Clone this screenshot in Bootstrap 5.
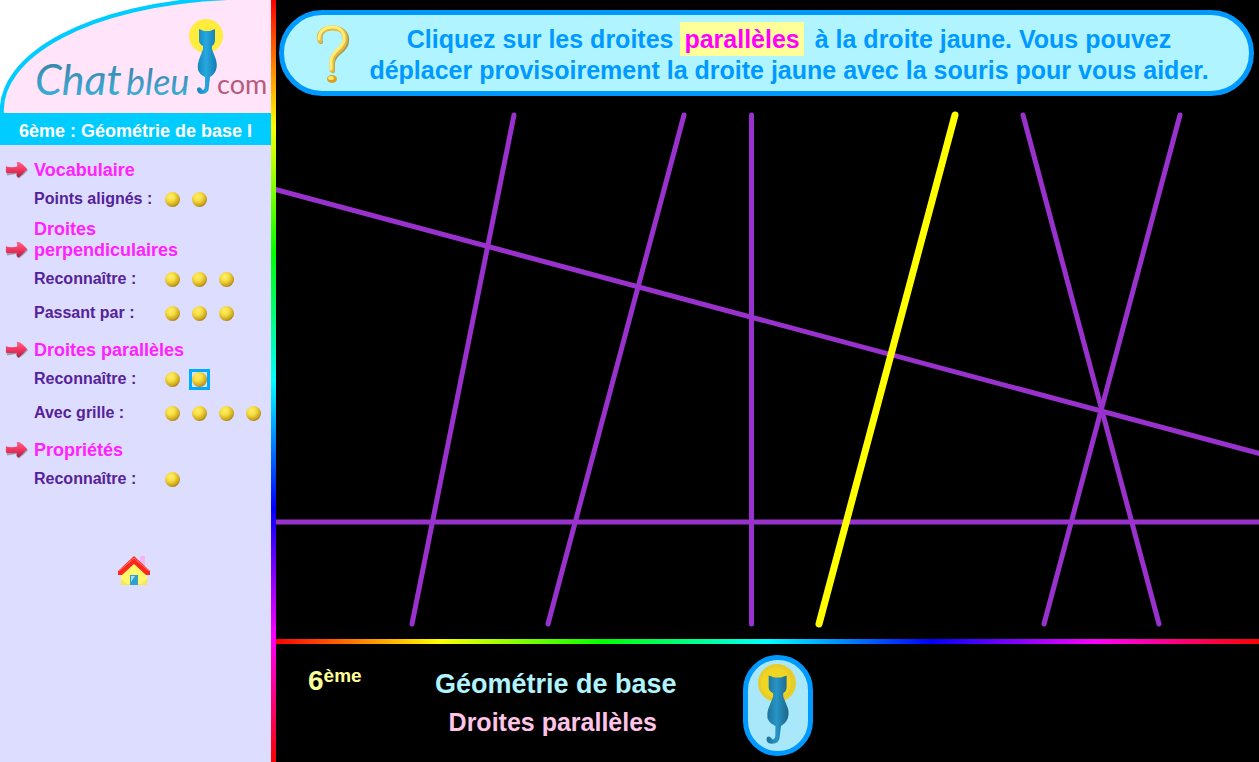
<!DOCTYPE html>
<html lang="fr">
<head>
<meta charset="utf-8">
<meta name="viewport" content="width=device-width, initial-scale=1">
<title>Chat bleu - Droites parallèles</title>
<link href="https://cdn.jsdelivr.net/npm/bootstrap@5.3.0/dist/css/bootstrap.min.css" rel="stylesheet">
<style>
  body { background: #000; font-family: "Liberation Sans", Arial, sans-serif; font-weight: 700; }
  .side { width: 271px; background: #ddf; }
  .side-title { background: #0cf; font-size: 18px; line-height: 32px; padding-top: 2px; height: 32px; }
  .logo { display: block; width: 100%; background: #fff; }
  .rainbow-v { width: 5px; background: linear-gradient(to bottom, red, #ff0, #0f0, #0ff, #00f, #f0f, red); }
  .rainbow-h { height: 5px; background: linear-gradient(to right, red, #ff0, #0f0, #0ff, #00f, #f0f, red); }
  .menu { padding-top: 5px; }
  .topic { min-height: 32px; padding: 3px 40px 1px 5px; gap: 5px; color: #f2f; font-size: 18px; line-height: 21px; margin: 0; font-weight: 700; }
  .topic svg { margin-bottom: 2px; }
  .exo { height: 34px; padding-left: 34px; color: #529; font-size: 16px; }
  .exo-name { width: 128px; }
  .balls { gap: 6px; }
  .ball { width: 21px; height: 21px; padding: 3px; display: block; }
  .ball::before { content: ""; display: block; width: 15px; height: 15px; border-radius: 50%;
    background: radial-gradient(circle at 38% 32%, #fff06a 0, #f5dc42 32%, #cfa81c 62%, #72560a 94%); }
  .ball.current { border: 3px solid #0af; padding: 0; }
  .home { margin-top: 59px; padding-right: 4px; }
  .banner { margin: 10px 5px 0 3px; padding: 9px 29px 5px 31px; gap: 7px; border: 5px solid #09f; background: #b0f4ff; color: #09f; font-size: 25px; line-height: 31px; }
  .key { background: #ff9; color: #f0f; padding: 3px 4px; margin-right: 4px; }
  .board { display: block; width: 100%; }
  .foot { padding: 11px 32px 6px; }
  .level { width: 127px; color: #ff9; font-size: 28px; line-height: 32px; padding-top: 10px; }
  .level sup { font-size: 19px; top: -8px; vertical-align: baseline; }
  .chapter { padding-top: 10px; }
  .chapter h1 { font-size: 27px; line-height: 38px; color: #b0f4ff; font-weight: 700; margin: 0; }
  .chapter h2 { font-size: 25px; line-height: 38px; color: #ffc4e8; font-weight: 700; margin: 0; padding-right: 6px; }
  .cat-badge { width: 70px; height: 101px; margin-left: 66px; border: 5px solid #09f; border-radius: 35px; background: #a8e8fa; padding: 0; }
</style>
</head>
<body>
<svg width="0" height="0" class="position-absolute" aria-hidden="true">
  <defs>
    <linearGradient id="catBlue" x1="0" x2="1"><stop offset="0" stop-color="#1c6f96"/><stop offset=".45" stop-color="#2795c6"/><stop offset="1" stop-color="#1c658b"/></linearGradient>
    <linearGradient id="catLight" x1="0" x2="1"><stop offset="0" stop-color="#1585bb"/><stop offset=".45" stop-color="#27a8e0"/><stop offset="1" stop-color="#147caf"/></linearGradient>
    <linearGradient id="red" x1="0" x2="0" y1="0" y2="1"><stop offset="0" stop-color="#ff6688"/><stop offset=".5" stop-color="#f43562"/><stop offset="1" stop-color="#a42545"/></linearGradient>
    <linearGradient id="script" x1="0" x2="0" y1="0" y2="1"><stop offset="0" stop-color="#3b7c9c"/><stop offset="1" stop-color="#3bb5e5"/></linearGradient>
    <path id="catShape" d="M14 10L19 12H25L30 10V21Q30 25 27 27V30Q28 33 30 38Q33 45 31 51Q29 56 25 58L24 67Q24 75 17 75Q12 75 12 70Q13 67 16 69Q17 71 18 71Q20 70 20 66V58Q15 56 13 51Q12 45 15 38Q17 33 18 30V27Q14 25 14 21Z"/>
    <g id="arrow"><path d="M2 8L13 8V2Q19 4 25 9Q20 15 15 18Q12 17 14 13L2 15Z" fill="#777" opacity=".6"/><path d="M1 5Q7 7 14 5L13 2Q12 0 14 0Q18 1 24 8Q19 14 15 17Q11 16 13 12Q8 13 1 12Z" fill="url(#red)"/></g>
  </defs>
</svg>
<div class="d-flex min-vh-100">
  <aside class="side flex-shrink-0">
    <svg class="logo" viewBox="0 0 271 113" role="img" aria-label="Chat bleu.com">
      <path d="M2 115C-3 56 88 4 228-2H273V115Z" fill="#ffe4fa" stroke="#0cf" stroke-width="4"/>
      <path d="M269 0h2v113h-2z" fill="#ffe4fa"/>
      <circle cx="206" cy="36" r="17" fill="#ffec3d"/>
      <g fill="url(#script)" font-family="Lato, sans-serif" font-weight="400" font-style="italic">
        <text x="35" y="95" font-size="43">Chat</text>
        <text x="126" y="95" font-size="36">bleu</text>
      </g>
      <text x="217" y="94" font-family="Lato, sans-serif" font-size="27" font-weight="400" fill="#b85a7c">com</text>
      <use href="#catShape" transform="translate(185 19)" fill="url(#catLight)"/>
    </svg>
    <div class="side-title text-white text-center">6ème : Géométrie de base I</div>
    <nav class="menu" aria-label="Exercices">
      <h2 class="topic d-flex align-items-end"><svg class="flex-shrink-0" width="24" height="18" viewBox="0 0 26 18"><use href="#arrow"/></svg><span>Vocabulaire</span></h2>
      <div class="exo d-flex align-items-center"><span class="exo-name">Points alignés :</span><div class="balls d-flex"><a class="ball" href="#" aria-label="Exercice 1"></a><a class="ball" href="#" aria-label="Exercice 2"></a></div></div>
      <h2 class="topic d-flex align-items-end"><svg class="flex-shrink-0" width="24" height="18" viewBox="0 0 26 18"><use href="#arrow"/></svg><span>Droites perpendiculaires</span></h2>
      <div class="exo d-flex align-items-center"><span class="exo-name">Reconnaître :</span><div class="balls d-flex"><a class="ball" href="#" aria-label="Exercice 1"></a><a class="ball" href="#" aria-label="Exercice 2"></a><a class="ball" href="#" aria-label="Exercice 3"></a></div></div>
      <div class="exo d-flex align-items-center"><span class="exo-name">Passant par :</span><div class="balls d-flex"><a class="ball" href="#" aria-label="Exercice 1"></a><a class="ball" href="#" aria-label="Exercice 2"></a><a class="ball" href="#" aria-label="Exercice 3"></a></div></div>
      <h2 class="topic d-flex align-items-end"><svg class="flex-shrink-0" width="24" height="18" viewBox="0 0 26 18"><use href="#arrow"/></svg><span class="text-nowrap">Droites parallèles</span></h2>
      <div class="exo d-flex align-items-center"><span class="exo-name">Reconnaître :</span><div class="balls d-flex"><a class="ball" href="#" aria-label="Exercice 1"></a><a class="ball current" href="#" aria-label="Exercice 2" aria-current="page"></a></div></div>
      <div class="exo d-flex align-items-center"><span class="exo-name">Avec grille :</span><div class="balls d-flex"><a class="ball" href="#" aria-label="Exercice 1"></a><a class="ball" href="#" aria-label="Exercice 2"></a><a class="ball" href="#" aria-label="Exercice 3"></a><a class="ball" href="#" aria-label="Exercice 4"></a></div></div>
      <h2 class="topic d-flex align-items-end"><svg class="flex-shrink-0" width="24" height="18" viewBox="0 0 26 18"><use href="#arrow"/></svg><span>Propriétés</span></h2>
      <div class="exo d-flex align-items-center"><span class="exo-name">Reconnaître :</span><div class="balls d-flex"><a class="ball" href="#" aria-label="Exercice 1"></a></div></div>
    </nav>
    <div class="home text-center">
      <a href="#" aria-label="Accueil"><svg width="34" height="31" viewBox="0 0 34 31">
        <path d="M23 1h5v12h-5z" fill="#f3b5ee"/>
        <path d="M4 17L17 5L30 17V30H4Z" fill="#fff86a"/><path d="M4 24V30H30V24L24 29H10Z" fill="#f7e84c"/>
        <path d="M1 16L17 1L33 16V20H29L17 9L5 20H1Z" fill="#fb2820"/><path d="M2 16L17 3L32 16" fill="none" stroke="#ff7a6e" stroke-width="1"/>
        <path d="M13 20h8v10h-8z" fill="#2fa0d0"/><path d="M14 21h4l-4 6z" fill="#9fe2f5"/>
      </svg></a>
    </div>
  </aside>
  <div class="rainbow-v flex-shrink-0"></div>
  <main class="flex-grow-1 d-flex flex-column">
    <div class="banner rounded-pill d-flex align-items-center">
      <svg class="flex-shrink-0" width="36" height="60" viewBox="0 0 36 60" aria-hidden="true">
        <g fill="none" stroke-linecap="round" stroke-linejoin="round">
          <path d="M6 17C3 7 11 3 18 3C28 3 33 9 32 17C31 27 19 27 18 38V46" stroke="#a09a58" stroke-width="4"/>
          <path d="M5 16C2 7 10 3 17 3C27 3 31 8 30 16C29 26 17 26 17 37V45" stroke="#e6b93a" stroke-width="5"/>
          <path d="M4 14C4 6 10 2 17 2C26 2 30 8 29 15C28 24 16 26 16 36V44" stroke="#ffed78" stroke-width="3"/>
        </g>
        <ellipse cx="17" cy="54" rx="5" ry="4" fill="#d7a21f"/><ellipse cx="16" cy="53" rx="3" ry="2" fill="#ffe35b"/>
      </svg>
      <div class="flex-grow-1 text-center">Cliquez sur les droites <span class="key">parallèles</span> à la droite jaune. Vous pouvez déplacer provisoirement la droite jaune avec la souris pour vous aider.</div>
    </div>
    <svg class="board" viewBox="276 96 983 543" role="img" aria-label="Droites à reconnaître">
      <g stroke="#9932cc" stroke-width="5" stroke-linecap="round">
        <path d="M514 115L412 624"/><path d="M684 115L548 624"/><path d="M751.5 115V624"/>
        <path d="M1023 115L1159 624"/><path d="M1180 115L1044 624"/>
        <path d="M270 188L1265 455"/><path d="M270 522H1265"/>
      </g>
      <path d="M955 115L819 624" stroke="#ff0" stroke-width="7" stroke-linecap="round"/>
    </svg>
    <div class="rainbow-h"></div>
    <footer class="foot d-flex align-items-start">
      <div class="level">6<sup>ème</sup></div>
      <div class="chapter text-center text-nowrap"><h1>Géométrie de base</h1><h2>Droites parallèles</h2></div>
      <button type="button" class="cat-badge flex-shrink-0" aria-label="Chat bleu">
        <svg class="d-block" width="60" height="91" viewBox="0 0 60 91">
          <circle cx="29" cy="23" r="19" fill="#e8cc2a"/><circle cx="28" cy="23" r="15" fill="#f0d522"/>
          <use href="#catShape" transform="translate(5 5) scale(1.12 1.05)" fill="url(#catBlue)"/>
        </svg>
      </button>
    </footer>
  </main>
</div>
<script src="https://cdn.jsdelivr.net/npm/bootstrap@5.3.0/dist/js/bootstrap.bundle.min.js"></script>
</body>
</html>
